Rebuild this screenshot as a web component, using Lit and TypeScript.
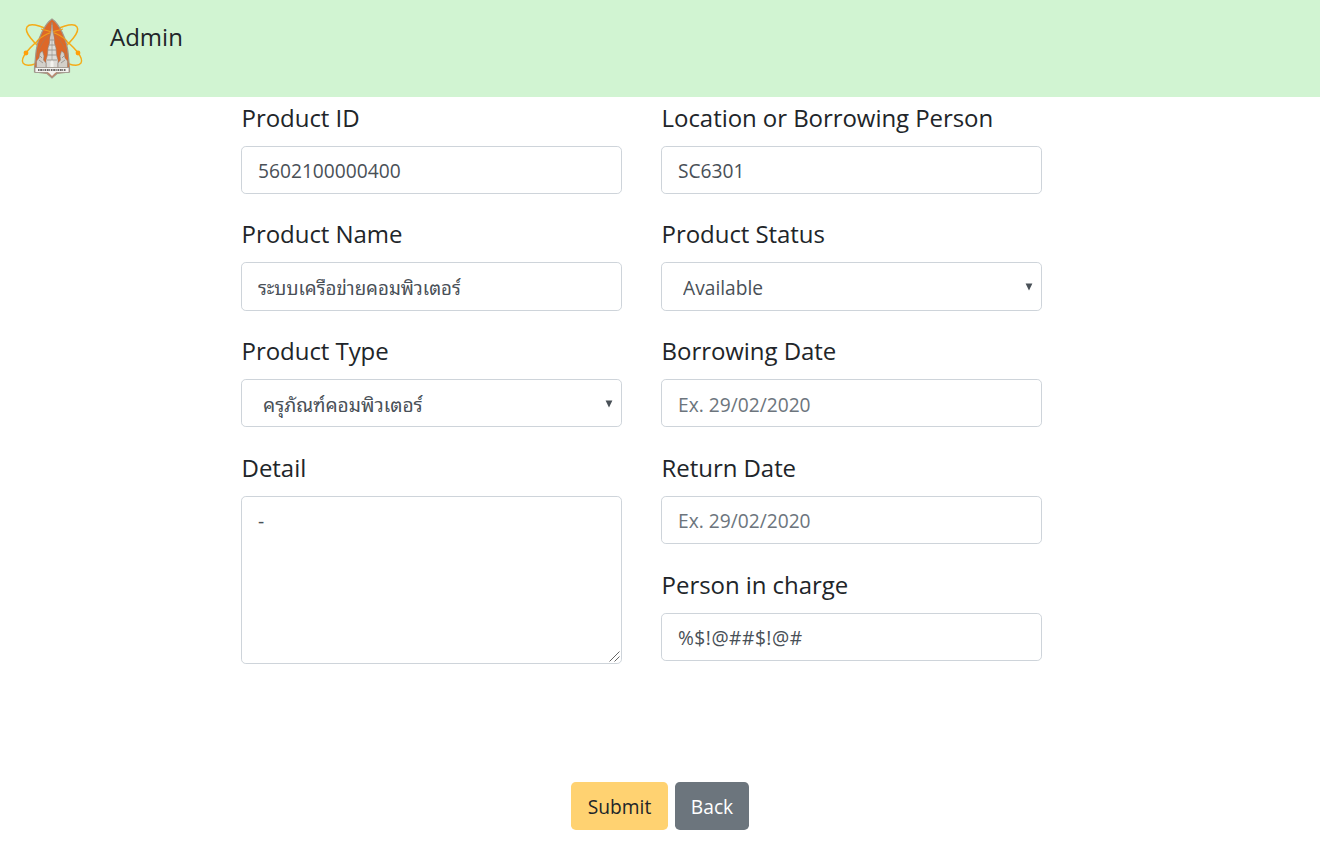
import { LitElement, html, css } from "lit";
import { customElement, property } from "lit/decorators.js";

const family = css`"Open Sans", "Noto Sans Thai Looped", "Loma", "Waree", "Umpush", "Noto Serif Thai", "Noto Sans", sans-serif`;

@customElement("brand-emblem")
class BrandEmblem extends LitElement {
  static styles = css`
    :host { display: block; width: 62px; height: 62px; }
    svg { display: block; overflow: visible; }
  `;

  render() {
    return html`<svg width="62" height="62" viewBox="0 0 62 62" fill="none">
      <g stroke="#f5ac18" stroke-width="1.5">
        <ellipse cx="33" cy="28" rx="32.500" ry="10.500" transform="rotate(34 33 28)"/>
        <ellipse cx="29" cy="28" rx="32.500" ry="10.500" transform="rotate(-34 29 28)"/>
      </g>
      <path d="M31 2C34 4 38 9 41 15C45 23 47 31 47.5 40L48.500 51V55L36 56.500L31 61L26 56.500L13.500 55V51L14.500 40C15 31 17 23 21 15C24 9 28 4 31 2Z" fill="#dd6828" stroke="#a3978a" stroke-width="1.2"/>
      <path d="M31 16C23 21 18 30 16 40M31 16C39 21 44 30 46 40" stroke="#b5764c" stroke-width=".8"/>
      <path d="M16 24C20 20 25 17 31 15C37 17 42 20 46 24M20 12C24 13 28 14 31 15C34 14 38 13 42 12" stroke="#f0a01c" stroke-width="1.2"/>
      <path d="M31 5L32 15L33 20L33.500 26L35 31L35.500 38L37 43V51H25V43L26.500 38L27 31L28.500 26L29 20L30 15Z" fill="#dedcd8" stroke="#8f8278" stroke-width=".6"/>
      <path d="M15.500 51V44L18 41L19 36L21.500 34L23 39L22.500 43L25 46V51ZM46.500 51V44L44 41L43 36L40.500 34L39 39L39.500 43L37 46V51Z" fill="#d3d0ca" stroke="#8d8279" stroke-width=".6"/>
      <path d="M31 8V50" stroke="#a8a39e" stroke-width=".8"/>
      <path d="M29 23H33M28 28H34M27 33H35M27 38H35M26 43H36M18 43L22 46M44 43L40 46M19 39L21 41M43 39L41 41" stroke="#8e8a86" stroke-width=".8"/>
      <path d="M29.500 50V45L31 43L32.500 45V50Z" fill="#f4f3ef"/>
      <path d="M14 50.500H48V55.500H35L31 59.500L27 55.500H14Z" fill="#f4f3ef" stroke="#9b9289" stroke-width=".8"/>
      <path d="M17 53H45" stroke="#403d3b" stroke-width="1.5" stroke-dasharray="1.5 .7 2 .5 1 .8"/>
      <circle cx="5" cy="36" r="2.400" fill="#ffa00a"/><circle cx="57" cy="36" r="2.400" fill="#ffa00a"/>
    </svg>`;
  }
}

@customElement("form-field")
class FormField extends LitElement {
  @property() label = "";
  @property() kind = "text";
  @property() value = "";
  @property() hint = "";

  static styles = css`
    :host { display: block; margin-bottom: 24.6px; }
    * { box-sizing: border-box; }
    .label { display: block; height: 36px; padding-left: .6px; font: 400 24px/31.2px ${family}; letter-spacing: -.06px; color: #212529; margin-bottom: 8px; white-space: nowrap; }
    .control {
      display: block; width: 100%; height: 48.2px; margin: 0; padding: 8.9px 16px 7.1px;
      border: 1px solid #ced4da; border-radius: 4.8px; background: #fff; color: #495057;
      font: 400 19.2px/30px ${family}; outline: none;
    }
    .control::placeholder { color: #6c757d; opacity: 1; }
    .thai { padding-top: 9px; padding-bottom: 7px; font-size: 18.7px; }
    .symbols { letter-spacing: .5px; }
    .frame { position: relative; }
    .area { height: 168px; resize: none; }
    .pick { appearance: none; padding: 10px 16px 6px 21px; }
    .arrow { position: absolute; right: 9px; top: 20.500px; }
    .grip { position: absolute; right: 2px; bottom: 2px; }
  `;

  control() {
    if (this.kind === "area")
      return html`<div class="frame">
        <textarea class="control area" .value=${this.value}></textarea>
        <svg class="grip" width="11" height="11" viewBox="0 0 11 11"><path d="M.5 10.500L10.500 .5M5.500 10.500L10.500 5.500" stroke="#555" stroke-width=".9"/></svg>
      </div>`;
    if (this.kind === "select")
      return html`<div class="frame">
        <select class="control pick"><option>${this.value}</option></select>
        <svg class="arrow" width="8" height="8" viewBox="0 0 8 8"><path d="M.6 .6H7.4L4 7.4Z" fill="#495057"/></svg>
      </div>`;
    const script = /[\u0e00-\u0e7f]/.test(this.value) ? "thai" : /^[^\w]+$/.test(this.value) ? "symbols" : "";
    return html`<input class="control ${script}" .value=${this.value} placeholder=${this.hint}>`;
  }

  render() {
    return html`<label class="label">${this.label}</label>${this.control()}`;
  }
}

@customElement("app-root")
class AppRoot extends LitElement {
  static styles = css`
    :host { display: block; min-height: 851px; background: #fff; font-family: ${family}; }
    * { box-sizing: border-box; }
    .bar { height: 97px; background: #d1f4d2; display: flex; padding: 17px 21px; }
    .title { margin-left: 27px; font-size: 24px; line-height: 36px; margin-top: 2px; color: #212529; }
    .columns { display: grid; grid-template-columns: 381px 381px; column-gap: 39px; margin-left: 241px; padding-top: 4.6px; height: 685px; align-items: start; }
    .actions { display: flex; justify-content: center; gap: 7px; }
    .btn { height: 48px; padding: 2px 0 0; border: 0; border-radius: 4.8px; font: 400 19.2px/30px ${family}; }
    .submit { width: 97px; background: #ffd271; color: #212529; }
    .back { width: 74px; background: #6c757d; color: #fff; }
  `;

  render() {
    return html`
      <header class="bar"><brand-emblem></brand-emblem><div class="title">Admin</div></header>
      <main class="columns">
        <section>
          <form-field label="Product ID" value="5602100000400"></form-field>
          <form-field label="Product Name" value="ระบบเครือข่ายคอมพิวเตอร์"></form-field>
          <form-field label="Product Type" kind="select" value="ครุภัณฑ์คอมพิวเตอร์"></form-field>
          <form-field label="Detail" kind="area" value="-"></form-field>
        </section>
        <section>
          <form-field label="Location or Borrowing Person" value="SC6301"></form-field>
          <form-field label="Product Status" kind="select" value="Available"></form-field>
          <form-field label="Borrowing Date" hint="Ex. 29/02/2020"></form-field>
          <form-field label="Return Date" hint="Ex. 29/02/2020"></form-field>
          <form-field label="Person in charge" value="%$!@##$!@#"></form-field>
        </section>
      </main>
      <footer class="actions"><button class="btn submit">Submit</button><button class="btn back">Back</button></footer>
    `;
  }
}
